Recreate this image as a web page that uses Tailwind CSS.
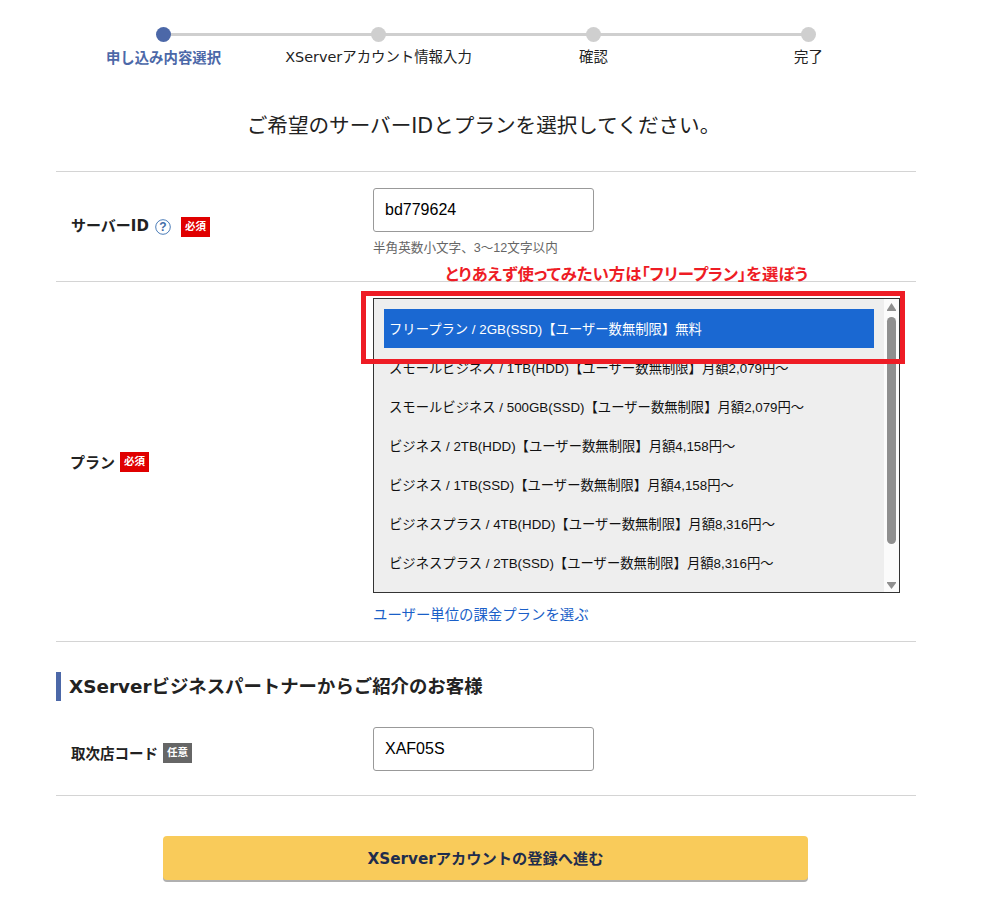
<!DOCTYPE html>
<html lang="ja">
<head>
<meta charset="utf-8">
<script src="https://cdn.jsdelivr.net/npm/@tailwindcss/browser@4"></script>
</head>
<body class="bg-white text-[#222] font-['Liberation_Sans','Noto_Sans_CJK_JP',sans-serif]">
<div class="relative w-[860px] ml-[56px] h-[924px]">
  <!-- stepper -->
  <div class="grid grid-cols-4 pt-[27px] font-['DejaVu_Sans','Noto_Sans_CJK_JP',sans-serif] text-[14.4px] leading-[20px]">
    <div class="relative flex flex-col items-center text-[#4c68a8] font-bold">
      <div class="absolute left-1/2 right-[-50%] top-[6px] h-[3px] bg-[#cfcfcf]"></div>
      <div class="relative w-[15px] h-[15px] rounded-full bg-[#4c68a8]"></div>
      <div class="mt-[5px] mb-[1px] font-['Noto_Sans_CJK_JP',sans-serif]">申し込み内容選択</div>
    </div>
    <div class="relative flex flex-col items-center">
      <div class="absolute left-1/2 right-[-50%] top-[6px] h-[3px] bg-[#cfcfcf]"></div>
      <div class="relative w-[15px] h-[15px] rounded-full bg-[#cfcfcf]"></div>
      <div class="mt-[5px] mb-[1px]">XServerアカウント情報入力</div>
    </div>
    <div class="relative flex flex-col items-center">
      <div class="absolute left-1/2 right-[-50%] top-[6px] h-[3px] bg-[#cfcfcf]"></div>
      <div class="relative w-[15px] h-[15px] rounded-full bg-[#cfcfcf]"></div>
      <div class="mt-[5px] mb-[1px]">確認</div>
    </div>
    <div class="relative flex flex-col items-center">
      <div class="relative w-[15px] h-[15px] rounded-full bg-[#cfcfcf]"></div>
      <div class="mt-[5px] mb-[1px]">完了</div>
    </div>
  </div>

  <h1 class="mt-[43px] pr-[5px] text-center text-[20.6px] leading-[30px] font-normal font-['DejaVu_Sans','Noto_Sans_CJK_JP',sans-serif]">ご希望のサーバーIDとプランを選択してください。</h1>

  <!-- server id -->
  <div class="mt-[30px] border-t border-[#d4d4d4] h-[110px] flex">
    <div class="w-[317px] pl-[15px] pt-[43px] flex items-center h-[66px] gap-[6px]">
      <span class="font-bold text-[15px] font-['DejaVu_Sans','Noto_Sans_CJK_JP',sans-serif]">サーバーID</span>
      <svg width="16" height="16" viewBox="0 0 16 16" class="shrink-0"><circle cx="8" cy="8" r="7.3" fill="none" stroke="#4c7db8" stroke-width="1"/><text x="8" y="12.3" text-anchor="middle" font-size="12" font-weight="700" fill="#3f6da8" font-family="Liberation Sans">?</text></svg>
      <span class="ml-[4px] w-[29px] h-[20px] bg-[#e00000] text-white text-[10.5px] font-bold flex items-center justify-center">必須</span>
    </div>
    <div class="pt-[16px]">
      <div class="w-[221px] h-[44px] border border-[#999] rounded-[3px] pl-[11px] pb-[1px] flex items-center text-[16px] text-black">bd779624</div>
      <p class="mt-[7px] text-[12.6px] leading-[18px] text-[#666]">半角英数小文字、3～12文字以内</p>
    </div>
  </div>

  <!-- plan -->
  <div class="border-t border-[#d4d4d4] h-[360px] flex">
    <div class="w-[317px] pl-[14px] h-[360px] flex items-center gap-[5px]">
      <span class="font-bold text-[15px] font-['Noto_Sans_CJK_JP',sans-serif]">プラン</span>
      <span class="w-[29px] h-[20px] bg-[#e00000] text-white text-[10.5px] font-bold flex items-center justify-center">必須</span>
    </div>
    <div class="pt-[16px]">
      <div class="w-[527px] h-[295px] border border-[#333] bg-[#eeeeee] flex">
        <div class="flex-1 pl-[10px] pt-[10px] text-[13.33px] text-[#111]">
          <div class="w-[490px] h-[39px] pl-[5px] pt-[2px] flex items-center bg-[#1a68d2] text-white">フリープラン / 2GB(SSD)【ユーザー数無制限】無料</div>
          <div class="h-[39px] pl-[5px] pt-[2px] flex items-center">スモールビジネス / 1TB(HDD)【ユーザー数無制限】月額2,079円～</div>
          <div class="h-[39px] pl-[5px] pt-[2px] flex items-center">スモールビジネス / 500GB(SSD)【ユーザー数無制限】月額2,079円～</div>
          <div class="h-[39px] pl-[5px] pt-[2px] flex items-center">ビジネス / 2TB(HDD)【ユーザー数無制限】月額4,158円～</div>
          <div class="h-[39px] pl-[5px] pt-[2px] flex items-center">ビジネス / 1TB(SSD)【ユーザー数無制限】月額4,158円～</div>
          <div class="h-[39px] pl-[5px] pt-[2px] flex items-center">ビジネスプラス / 4TB(HDD)【ユーザー数無制限】月額8,316円～</div>
          <div class="h-[39px] pl-[5px] pt-[2px] flex items-center">ビジネスプラス / 2TB(SSD)【ユーザー数無制限】月額8,316円～</div>
        </div>
        <div class="w-[15px] bg-[#fbfbfb] flex flex-col items-center pt-[4px] pb-[3px]">
          <svg width="9" height="8" viewBox="0 0 9 8"><path d="M4.5 0 L9 7 V8 H0 V7 Z" fill="#8f8f8f"/></svg>
          <div class="mt-[6px] w-[9px] h-[227px] rounded-full bg-[#8f8f8f]"></div>
          <svg class="mt-auto" width="9" height="7" viewBox="0 0 9 7"><path d="M0 0 H9 V1 L4.5 7 L0 1 Z" fill="#8f8f8f"/></svg>
        </div>
      </div>
      <a class="block mt-[12px] text-[14.4px] leading-[20px] text-[#1a5fc8] font-['DejaVu_Sans','Noto_Sans_CJK_JP',sans-serif]">ユーザー単位の課金プランを選ぶ</a>
    </div>
  </div>

  <!-- partner -->
  <div class="border-t border-[#d4d4d4] pt-[30px]">
    <h2 class="border-l-[5px] border-[#4c68a8] pl-[8px] h-[29px] flex items-center text-[18.4px] font-bold font-['DejaVu_Sans','Noto_Sans_CJK_JP',sans-serif]">XServerビジネスパートナーからご紹介のお客様</h2>
    <div class="flex h-[94px] pt-[26px]">
      <div class="w-[317px] pl-[15px] h-[44px] flex items-center gap-[5px] pt-[8px]">
        <span class="font-bold text-[14.5px] font-['Noto_Sans_CJK_JP',sans-serif]">取次店コード</span>
        <span class="w-[29px] h-[20px] bg-[#666] text-white text-[10.5px] font-bold flex items-center justify-center">任意</span>
      </div>
      <div class="w-[221px] h-[44px] border border-[#999] rounded-[3px] pl-[11px] pb-[1px] flex items-center text-[16px] text-black">XAF05S</div>
    </div>
  </div>

  <div class="border-t border-[#d4d4d4] pt-[40px]">
    <button class="block ml-[107px] w-[645px] h-[44px] pt-[2px] rounded-[4px] bg-[#f9cb5a] shadow-[0_2px_0_#b0b0b0] text-[#1f2d4d] text-[15.25px] font-bold font-['DejaVu_Sans','Noto_Sans_CJK_JP',sans-serif]">XServerアカウントの登録へ進む</button>
  </div>

  <!-- annotation overlay -->
  <div class="absolute left-[389px] top-[262px] text-[16.4px] leading-[22px] font-bold text-[#ee1c25] font-['Noto_Sans_CJK_JP',sans-serif] whitespace-nowrap [font-feature-settings:'palt']">とりあえず使ってみたい方は「フリープラン」を選ぼう</div>
  <div class="absolute left-[305px] top-[291px] w-[544px] h-[73px] border-[5px] border-[#ee1c25]"></div>
</div>
</body>
</html>
